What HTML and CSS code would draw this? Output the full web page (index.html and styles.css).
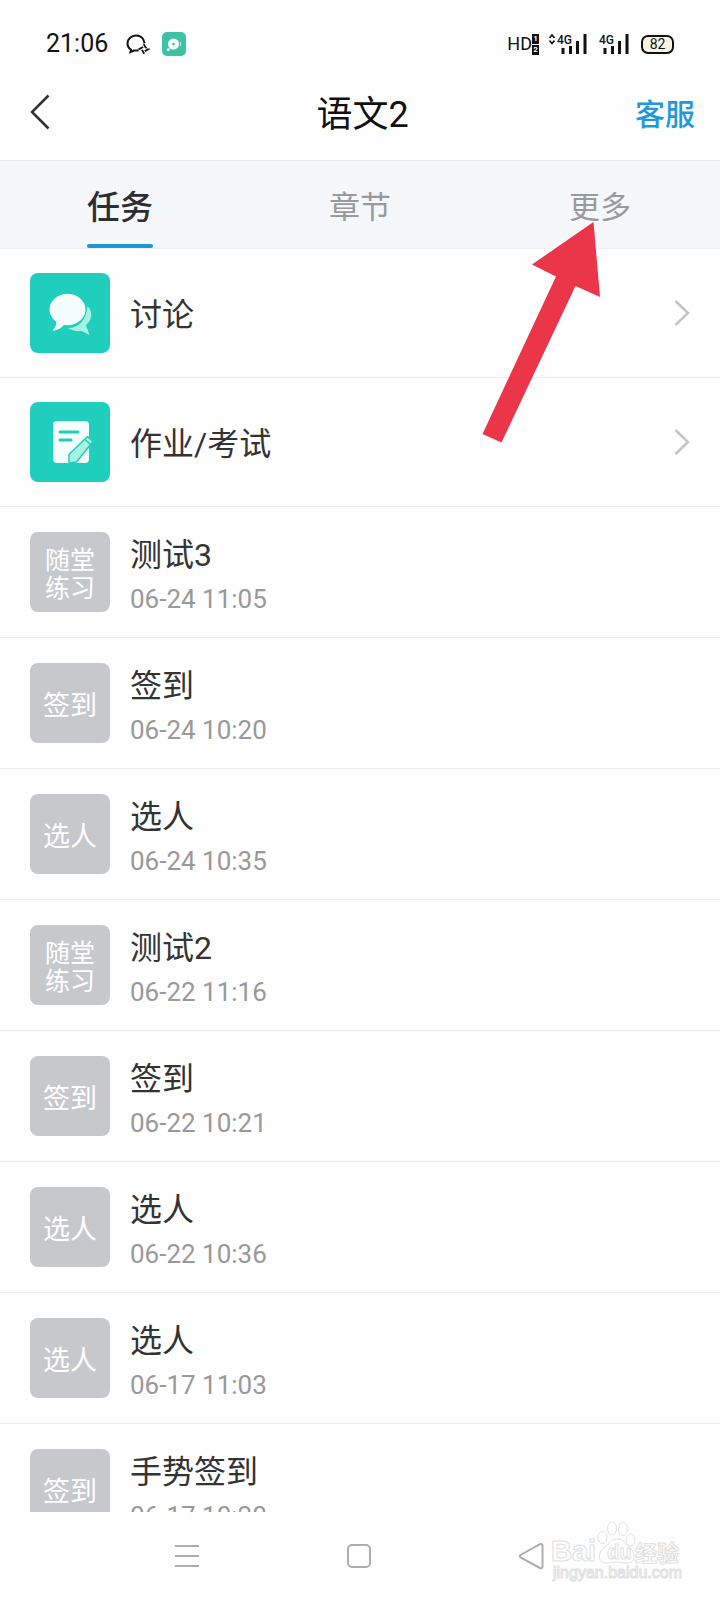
FILE: index.html
```html
<!DOCTYPE html>
<html lang="zh-CN">
<head>
<meta charset="utf-8">
<meta name="viewport" content="width=device-width, initial-scale=1">
<title>语文2</title>
<link rel="stylesheet" href="styles.css">
</head>
<body>
<div class="screen">
  <div class="status">
    <div class="status-left">
      <span class="clock">21:06</span>
      <svg class="chat-icon" width="24" height="20" viewBox="0 0 24 20" fill="none" stroke="#111" stroke-width="2">
        <path d="M18.500 9C18 4.500 14.500 1.500 10 1.500S1.500 5 1.500 9.500c0 3 1.500 5 3.500 6.200L4.500 18l3.500-1.500h4.500"/>
        <path d="M18 10.500l1.600 2.900 2.900 1.600-2.900 1.600L18 19.500l-1.600-2.900-2.900-1.600 2.900-1.600z" stroke-width="1.800" stroke-dasharray="4.500 2"/>
      </svg>
      <svg width="24" height="24" viewBox="0 0 24 24">
        <rect width="24" height="24" rx="5" fill="#3fc1a8"/>
        <circle cx="11.500" cy="12" r="5.500" fill="#fff"/><circle cx="11.500" cy="12" r="1.300" fill="#3fc1a8"/>
        <circle cx="6.300" cy="17.500" r="1.500" fill="#fff"/><path d="M18.500 10v4" stroke="#c5eee5" stroke-width="1"/>
      </svg>
    </div>
    <div class="status-right">
      <span class="hd">HD</span>
      <span class="sims"><span class="sim">1</span><span class="sim">2</span></span>
      <svg class="data" width="6" height="20" viewBox="0 0 6 20"><path d="M0.500 4l2.500-3 2.500 3M0.500 6.500l2.500 3 2.500-3" fill="none" stroke="#111" stroke-width="1.600"/></svg>
      <span class="signal"><span class="net">4G</span><svg width="26" height="20" viewBox="0 0 26 20"><path d="M2 20v-6M9.500 20v-8M16.500 20V7M24 20V0" stroke="#111" stroke-width="3"/></svg></span>
      <span class="signal"><span class="net">4G</span><svg width="26" height="20" viewBox="0 0 26 20"><path d="M2 20v-6M9.500 20v-8M16.500 20V7M24 20V0" stroke="#111" stroke-width="3"/></svg></span>
      <span class="battery">82</span>
    </div>
  </div>

  <header class="header">
    <button class="back" aria-label="返回">
      <svg width="20" height="36" viewBox="0 0 20 36" fill="none" stroke="#333" stroke-width="2.500"><path d="M18.500 1.500L2 18l16.500 16.500"/></svg>
    </button>
    <h1 class="title">语文2</h1>
    <a class="service" href="#">客服</a>
  </header>

  <nav class="tabs">
    <button class="tab tab-active">任务</button>
    <button class="tab">章节</button>
    <button class="tab">更多
      <svg class="pointer" width="118" height="222" viewBox="0 0 118 222"><path d="M111.500 1L50 43.500l24 12L0.500 213l19 8.500L93.500 65l24.500 11z" fill="#eb3549"/></svg>
    </button>
  </nav>

  <main class="list">
    <a class="row entry" href="#">
      <svg class="tile tile-green" viewBox="0 0 80 80">
        <path d="M57.500 33c6 6 4.500 14-1.500 19l3.500 10-8-4c-5 .5-10-.5-13.500-3 11 0 18.500-8 19.500-22z" fill="#a6f3e4"/>
        <ellipse cx="37.500" cy="36.500" rx="18" ry="15.700" fill="#f4fffd"/>
        <path d="M26 46c1 5-.5 8-3.500 12 5-1 9.500-3 12-7z" fill="#f4fffd"/>
      </svg>
      <span class="name">讨论</span>
      <svg class="arrow" width="16" height="26" viewBox="0 0 16 26"><path d="M1.500 1l12.500 12L1.500 25"/></svg>
    </a>
    <a class="row entry" href="#">
      <svg class="tile tile-green" viewBox="0 0 80 80">
        <rect x="23" y="19" width="36" height="42" rx="4" fill="#f4fffd"/>
        <path d="M30 30h18M30 38h11" stroke="#1fcebc" stroke-width="3" stroke-linecap="round"/>
        <path d="M39 61v-8.500L57.500 34.500l5.500 5L46.500 60z" fill="#a6f3e4" stroke="#1fcebc" stroke-width="1.500" stroke-linejoin="round"/>
        <path d="M55 37.500l5.500 5" stroke="#1fcebc" stroke-width="1.500"/>
      </svg>
      <span class="name">作业/考试</span>
      <svg class="arrow" width="16" height="26" viewBox="0 0 16 26"><path d="M1.500 1l12.500 12L1.500 25"/></svg>
    </a>
    <a class="row task" href="#"><span class="tile tile-grey tile-small">随堂<br>练习</span><span class="info"><span class="name">测试3</span><time class="date">06-24 11:05</time></span></a>
    <a class="row task" href="#"><span class="tile tile-grey">签到</span><span class="info"><span class="name">签到</span><time class="date">06-24 10:20</time></span></a>
    <a class="row task" href="#"><span class="tile tile-grey">选人</span><span class="info"><span class="name">选人</span><time class="date">06-24 10:35</time></span></a>
    <a class="row task" href="#"><span class="tile tile-grey tile-small">随堂<br>练习</span><span class="info"><span class="name">测试2</span><time class="date">06-22 11:16</time></span></a>
    <a class="row task" href="#"><span class="tile tile-grey">签到</span><span class="info"><span class="name">签到</span><time class="date">06-22 10:21</time></span></a>
    <a class="row task" href="#"><span class="tile tile-grey">选人</span><span class="info"><span class="name">选人</span><time class="date">06-22 10:36</time></span></a>
    <a class="row task" href="#"><span class="tile tile-grey">选人</span><span class="info"><span class="name">选人</span><time class="date">06-17 11:03</time></span></a>
    <a class="row task" href="#"><span class="tile tile-grey">签到</span><span class="info"><span class="name">手势签到</span><time class="date">06-17 10:20</time></span></a>
  </main>

  <div class="system-nav">
    <button class="key" aria-label="最近任务"><svg width="26" height="26" viewBox="0 0 26 26"><path d="M1 3h24M1 13h24M1 23h24"/></svg></button>
    <button class="key" aria-label="主屏幕"><svg width="26" height="26" viewBox="0 0 26 26"><rect x="2" y="2" width="22" height="22" rx="4"/></svg></button>
    <button class="key" aria-label="返回"><svg width="28" height="28" viewBox="0 0 28 28"><path d="M22 2.200L2.500 13c-1 .7-1 1.600 0 2.300L22 26c1.500.6 2.500 0 2.500-1.500v-21c0-1.500-1-2-2.500-1.300z"/></svg></button>
    <svg class="watermark" width="134" height="64" viewBox="0 0 134 64">
      <text x="1" y="41" class="wm-brand">Bai</text>
      <path d="M67 19c7 0 8 5 13 9s7 15-3 15c-5 0-6-1-10-1s-6 1-11 1c-9 0-8-11-2-15s6-9 13-9z"/>
      <ellipse cx="52.500" cy="17.500" rx="4.500" ry="6"/><ellipse cx="62" cy="8.500" rx="4.500" ry="6.500"/><ellipse cx="73" cy="9" rx="4.500" ry="6.500"/><ellipse cx="80.500" cy="20" rx="4.500" ry="6"/>
      <text x="57" y="39" class="wm-du">du</text>
      <text x="85" y="41" class="wm-cn">经验</text>
      <text x="3" y="58" class="wm-url">jingyan.baidu.com</text>
    </svg>
  </div>
</div>
</body>
</html>
```
FILE: styles.css
```css
* { box-sizing: border-box; }

body {
  margin: 0;
  background: #fefefe;
  color: #333;
  font-family: Roboto, "Noto Sans CJK SC", sans-serif;
}

button {
  padding: 0;
  border: 0;
  background: none;
  color: inherit;
  font: inherit;
}

a { color: inherit; text-decoration: none; }

svg { display: block; flex: none; }

.screen {
  display: flex;
  flex-direction: column;
  height: 100vh;
  overflow: hidden;
}

.status {
  display: flex;
  flex: none;
  justify-content: space-between;
  height: 68px;
  padding: 20px 46px 0;
  color: #111;
}

.status-left, .status-right { display: flex; align-items: center; }
.status-left { gap: 12px; }
.clock { margin-right: 6px; font-size: 25px; line-height: 48px; }
.hd { font-size: 18px; line-height: 20px; }
.sims { display: flex; flex-direction: column; gap: 1px; }
.sim { width: 7px; background: #111; color: #fff; font-size: 8px; font-weight: 700; line-height: 10px; text-align: center; }
.data { margin: 0 2px 0 10px; }
.signal { display: flex; align-items: flex-start; margin-right: 12px; }
.net { margin-right: -11px; font-size: 12px; font-weight: 500; line-height: 12px; }
.battery { width: 33px; border: 2px solid #111; border-radius: 7px; background: #f8f5e4; font-size: 14px; line-height: 15px; text-align: center; }

.header {
  display: grid;
  flex: none;
  grid-template-columns: 1fr auto 1fr;
  align-items: center;
  height: 92px;
  padding: 0 25px 4px 30px;
}

.back { justify-self: start; }
.title { margin: 0; padding-top: 6px; font-size: 36px; font-weight: 400; line-height: 52px; color: #111; }
.service { justify-self: end; font-size: 30px; font-weight: 500; color: #1f98dc; }

.tabs {
  display: flex;
  flex: none;
  height: 89px;
  border-top: 1px solid #e9eaed;
  border-bottom: 1px solid #f0f1f4;
  background: #f6f7fb;
}

.tab {
  position: relative;
  flex: 1;
  font-size: 31px;
  color: #989a9d;
}

.tab-active { font-size: 33px; font-weight: 500; color: #2d2e32; }

.tab-active::after {
  position: absolute;
  bottom: 0;
  left: 50%;
  width: 66px;
  height: 4px;
  border-radius: 2px;
  background: #1b98d5;
  content: "";
  transform: translateX(-50%);
}

.pointer { position: absolute; z-index: 2; top: 60px; right: 50%; }

.list { flex: 1; min-height: 0; overflow: hidden; }

.row {
  display: flex;
  gap: 20px;
  padding: 24px 30px;
  border-bottom: 1px solid #ececee;
}

.entry { align-items: center; }
.task { padding: 25px 30px; }

.tile { flex: none; width: 80px; height: 80px; border-radius: 8px; }
.tile-green { background: #1fcebc; }

.tile-grey {
  display: flex;
  align-items: center;
  justify-content: center;
  padding-top: 5px;
  background: #c7c8cc;
  color: #fff;
  font-size: 27px;
  line-height: 28px;
}

.tile-small { font-size: 25px; }

.name { font-size: 32px; line-height: 40px; }
.entry .name { flex: 1; padding-top: 4px; }
.info { display: flex; flex-direction: column; gap: 7px; padding-top: 3px; margin-bottom: -4px; }
.date { font-size: 26px; line-height: 34px; color: #999; }
.arrow { fill: none; stroke: #c4c4c6; stroke-width: 2.5; }

.system-nav {
  position: relative;
  display: flex;
  flex: none;
  align-items: center;
  justify-content: space-between;
  height: 88px;
  padding: 0 174px;
}

.key svg { fill: none; stroke: #adadad; stroke-width: 2; }

.watermark {
  position: absolute;
  top: 8px;
  right: 36px;
  fill: #fff;
  stroke: #e0e0e0;
  stroke-width: 1;
}

.wm-brand { font: 700 29px "Liberation Sans", sans-serif; }
.wm-du { font: 700 20px "Liberation Sans", sans-serif; }
.wm-cn { font: 700 22px "Noto Sans CJK SC", sans-serif; }
.wm-url { font: 16px "Liberation Sans", sans-serif; }
```
